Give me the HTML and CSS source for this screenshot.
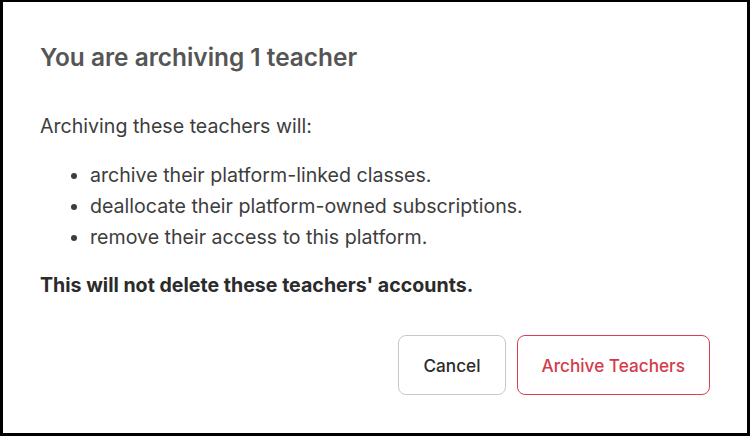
FILE: index.html
```html
<!DOCTYPE html>
<html lang="en">

<head>
    <meta charset="UTF-8">
    <meta name="viewport" content="width=device-width, initial-scale=1.0">
    <title>Archive Teachers</title>
    <link rel="stylesheet" href="styles.css">
</head>

<body>
    <main class="dialog">
        <h2 class="dialog-title">You are archiving 1 teacher</h2>
        <p class="dialog-text">Archiving these teachers will:</p>
        <ul class="dialog-list">
            <li>archive their platform-linked classes.</li>
            <li>deallocate their platform-owned subscriptions.</li>
            <li>remove their access to this platform.</li>
        </ul>
        <p class="dialog-warning">This will not delete these teachers' accounts.</p>
        <div class="dialog-actions">
            <button class="btn btn-cancel">Cancel</button>
            <button class="btn btn-danger">Archive Teachers</button>
        </div>
    </main>
</body>

</html>
```

FILE: styles.css
```css
* {
    margin: 0;
    padding: 0;
    box-sizing: border-box;
}

body {
    font-family: Inter, "Noto Sans", sans-serif;
    background-color: #fff;
}

.dialog {
    width: 750px;
    height: 436px;
    border: 3px solid #000;
    border-top-width: 2px;
    padding: 40px 37px 38px 37px;
    display: flex;
    flex-direction: column;
}

.dialog-title {
    font-size: 24.4px;
    font-weight: 600;
    color: #555;
    line-height: 30px;
}

.dialog-text {
    margin-top: 42px;
    font-size: 19.6px;
    color: #3d3d3d;
    line-height: 24px;
}

.dialog-list {
    margin-top: 22px;
    padding-left: 50px;
    font-size: 19.6px;
    color: #3d3d3d;
    line-height: 31px;
}

.dialog-warning {
    margin-top: 20px;
    font-size: 19.6px;
    font-weight: 700;
    color: #2b2b2b;
    line-height: 24px;
}

.dialog-actions {
    margin-top: auto;
    display: flex;
    justify-content: flex-end;
    gap: 11px;
}

.btn {
    height: 60px;
    padding: 0 24px;
    border-radius: 8px;
    background-color: #fff;
    font-family: inherit;
    font-size: 17.2px;
    font-weight: 500;
}

.btn-cancel {
    border: 1px solid #c8c8c8;
    color: #2b2b2b;
}

.btn-danger {
    border: 1px solid #d9404e;
    color: #d63a4a;
}
```
